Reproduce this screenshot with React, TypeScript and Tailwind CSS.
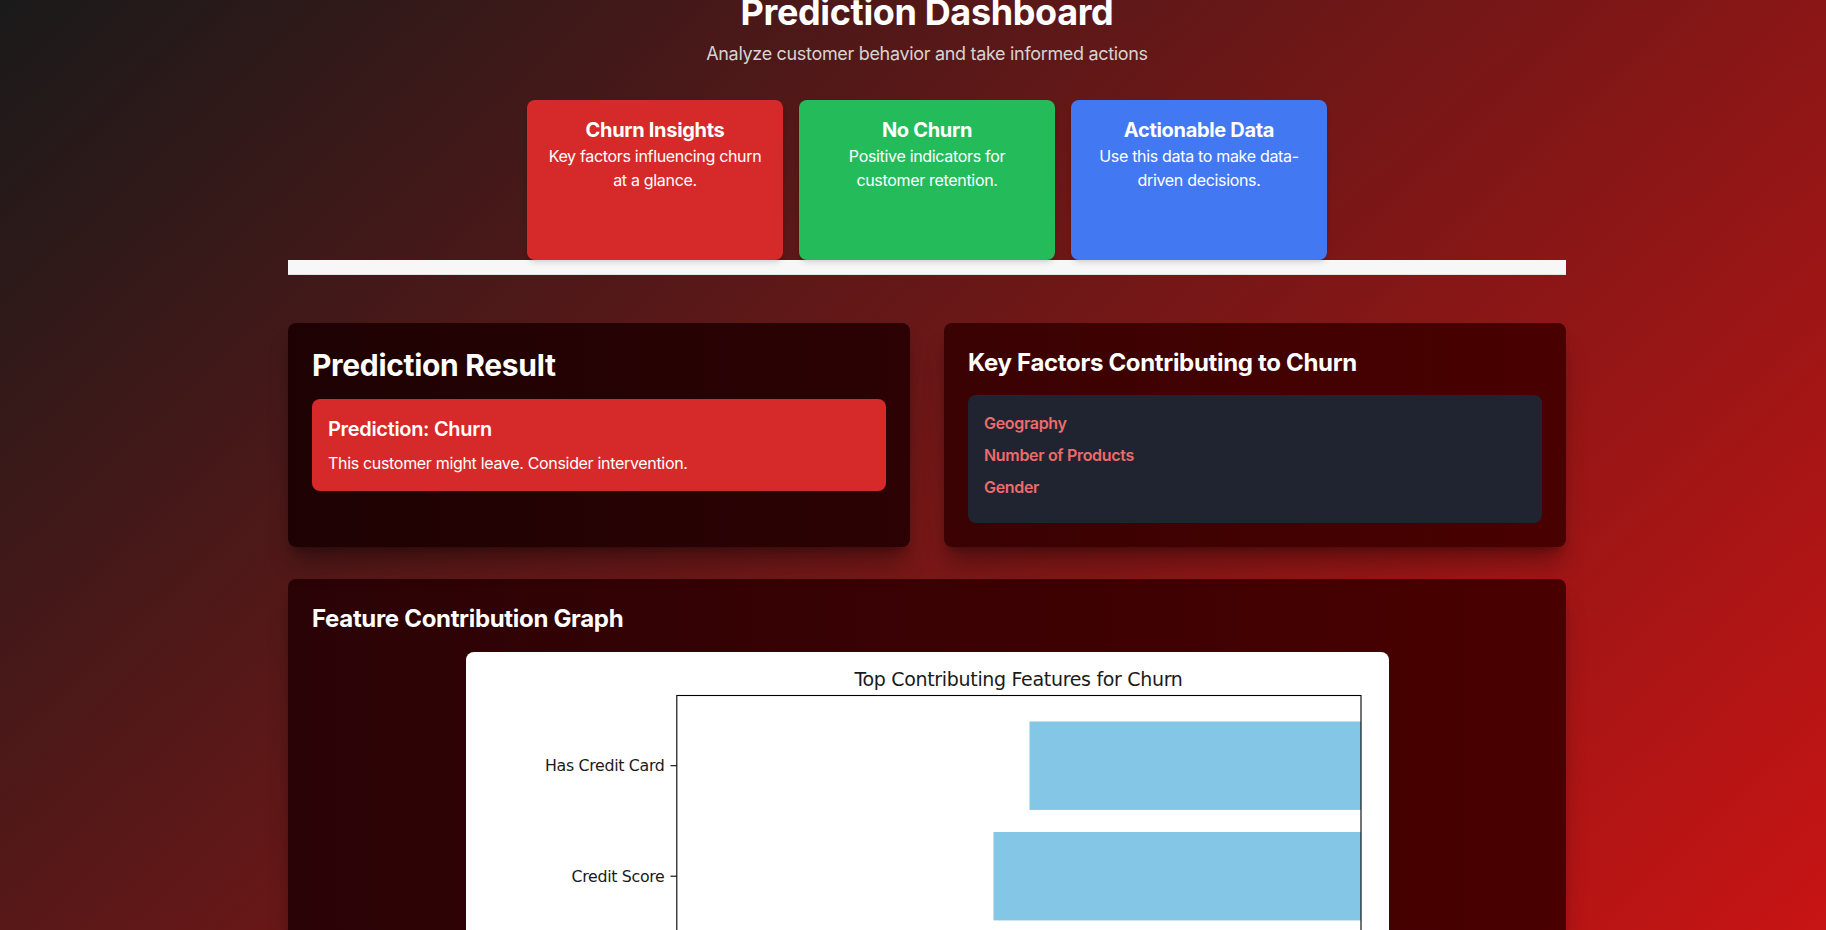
const cards = [
  { title: "Churn Insights", text: "Key factors influencing churn at a glance.", bg: "bg-[#d62a2a]" },
  { title: "No Churn", text: "Positive indicators for customer retention.", bg: "bg-[#24bc5b]" },
  { title: "Actionable Data", text: "Use this data to make data-driven decisions.", bg: "bg-[#4279f2]" },
];

const factors = ["Geography", "Number of Products", "Gender"];

const bars = [
  { label: "Has Credit Card", x: 563.5, y: 69.5 },
  { label: "Credit Score", x: 527.5, y: 180 },
];

function ChurnChart() {
  return (
    <svg width="923" height="560" viewBox="0 0 923 560" className="block">
      <text
        x="552.5"
        y="33.5"
        textAnchor="middle"
        fontSize="19"
        fill="#1a1a1a"
        fontFamily="'DejaVu Sans', sans-serif"
      >
        Top Contributing Features for Churn
      </text>
      {bars.map((b) => (
        <g key={b.label}>
          <rect x={b.x} y={b.y} width={895 - b.x} height="88.4" fill="#83c6e6" />
          <line x1="204.5" x2="210.8" y1={b.y + 44.2} y2={b.y + 44.2} stroke="#000" strokeWidth="1.1" />
          <text
            x="198.5"
            y={b.y + 44.2}
            textAnchor="end"
            dominantBaseline="central"
            fontSize="15.8"
            fill="#1a1a1a"
            fontFamily="'DejaVu Sans', sans-serif"
          >
            {b.label}
          </text>
        </g>
      ))}
      <rect x="210.8" y="43.5" width="684.2" height="600" fill="none" stroke="#000" strokeWidth="1.1" />
    </svg>
  );
}

export default function App() {
  return (
    <div className="h-[930px] overflow-hidden bg-[linear-gradient(137deg,#1a1a1a,#c81414)] pl-7 font-['Inter',sans-serif] tracking-[-0.02em] text-white">
      <div className="mx-auto -mt-2 w-[1278px]">
        <header className="text-center">
          <h1 className="text-4xl leading-10 font-bold tracking-[-0.01em]">Prediction Dashboard</h1>
          <p className="mt-2 text-lg text-[#d6d3d3]">Analyze customer behavior and take informed actions</p>
        </header>

        <div className="mt-8 flex justify-center gap-4">
          {cards.map((c) => (
            <div key={c.title} className={`h-40 w-64 rounded-lg p-4 text-center shadow-md ${c.bg}`}>
              <h3 className="text-xl font-bold">{c.title}</h3>
              <p className="text-base">{c.text}</p>
            </div>
          ))}
        </div>
        <div className="h-[15px] border-b border-[#e3e3e3] bg-[#f7f7f7]" />

        <section className="mt-12 grid grid-cols-2 gap-[34px]">
          <div className="rounded-lg bg-[linear-gradient(to_right,#1e0203,#2c0204)] p-6 shadow-xl shadow-black/30">
            <h2 className="mb-4 text-3xl font-bold">Prediction Result</h2>
            <div className="rounded-lg bg-[#d62a2a] p-4">
              <h3 className="text-xl font-semibold">Prediction: Churn</h3>
              <p className="mt-2 text-base">This customer might leave. Consider intervention.</p>
            </div>
          </div>

          <div className="rounded-lg bg-[linear-gradient(to_right,#3a0203,#490000)] p-6 shadow-xl shadow-black/30">
            <h2 className="mb-4 text-2xl font-bold">Key Factors Contributing to Churn</h2>
            <ul className="flex flex-col gap-2 rounded-lg bg-[#1f2430] px-4 pt-4 pb-6">
              {factors.map((f) => (
                <li key={f} className="text-base font-semibold text-[#ef6a6a]">
                  {f}
                </li>
              ))}
            </ul>
          </div>
        </section>

        <section className="mt-8 rounded-lg bg-[linear-gradient(to_right,#2a0306,#4a0000)] px-6 pt-6 pb-6 shadow-xl shadow-black/30">
          <h2 className="text-2xl font-bold">Feature Contribution Graph</h2>
          <div className="mx-auto mt-[17px] w-[923px] overflow-hidden rounded-lg bg-white">
            <ChurnChart />
          </div>
        </section>
      </div>
    </div>
  );
}
